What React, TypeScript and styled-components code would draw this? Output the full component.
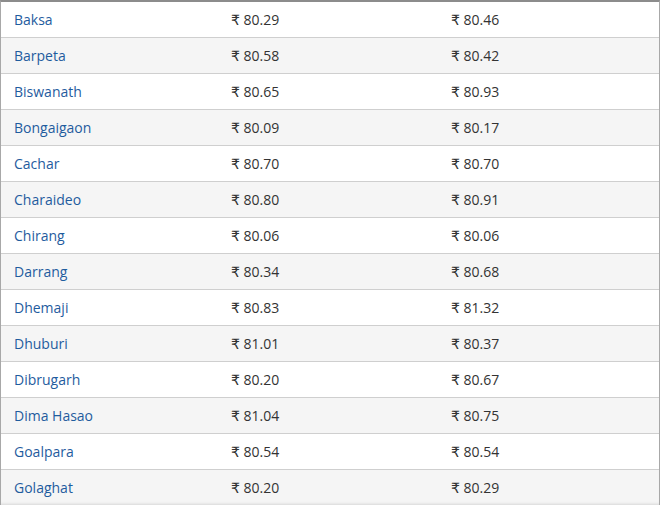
import React from 'react';
import styled, { createGlobalStyle } from 'styled-components';

const GlobalStyle = createGlobalStyle`
  body {
    margin: 0;
    background: #fff;
    font-family: 'Open Sans', 'DejaVu Sans', sans-serif;
  }
`;

const Frame = styled.div`
  width: 660px;
  box-sizing: border-box;
  border-top: 2px solid #8c8c8c;
  border-left: 1px solid #a8a8a8;
  border-right: 1px solid #a8a8a8;
`;

const Row = styled.div<{ striped: boolean; last?: boolean }>`
  display: grid;
  grid-template-columns: 217px 220px 1fr;
  height: 35px;
  align-items: center;
  background: ${(p) => (p.striped ? '#f5f5f5' : '#fff')};
  border-bottom: ${(p) => (p.last ? 'none' : '1px solid #cfcfcf')};
  box-shadow: ${(p) => (p.last ? 'inset 0 -3px 3px -2px rgba(0,0,0,0.12)' : 'none')};
`;

const District = styled.a`
  padding-left: 13px;
  font-size: 14px;
  color: #1f5c9e;
  text-decoration: none;
  white-space: nowrap;
`;

const Price = styled.span`
  padding-left: 13px;
  font-size: 14px;
  color: #333;
  white-space: nowrap;
`;

const rows: [string, string, string][] = [
  ['Baksa', '80.29', '80.46'],
  ['Barpeta', '80.58', '80.42'],
  ['Biswanath', '80.65', '80.93'],
  ['Bongaigaon', '80.09', '80.17'],
  ['Cachar', '80.70', '80.70'],
  ['Charaideo', '80.80', '80.91'],
  ['Chirang', '80.06', '80.06'],
  ['Darrang', '80.34', '80.68'],
  ['Dhemaji', '80.83', '81.32'],
  ['Dhuburi', '81.01', '80.37'],
  ['Dibrugarh', '80.20', '80.67'],
  ['Dima Hasao', '81.04', '80.75'],
  ['Goalpara', '80.54', '80.54'],
  ['Golaghat', '80.20', '80.29'],
];

const App = (): JSX.Element => {
  return (
    <>
      <GlobalStyle />
      <Frame>
        {rows.map(([name, today, yesterday], i) => (
          <Row key={name} striped={i % 2 === 1} last={i === rows.length - 1}>
            <District href="#">{name}</District>
            <Price>₹ {today}</Price>
            <Price>₹ {yesterday}</Price>
          </Row>
        ))}
      </Frame>
    </>
  );
};

export default App;
